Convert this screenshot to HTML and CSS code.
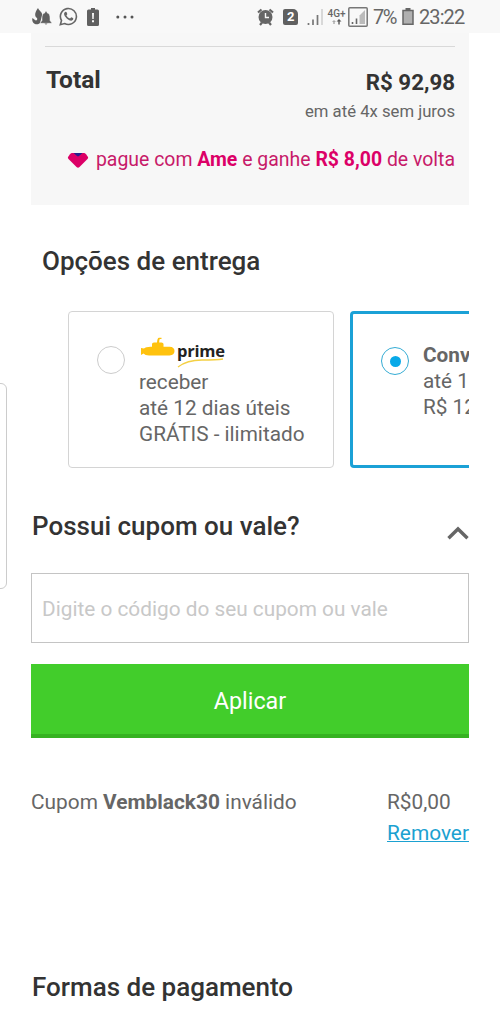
FILE: index.html
```html
<!DOCTYPE html>
<html lang="pt-BR">
<head>
<meta charset="utf-8">
<title>Carrinho</title>
<link rel="stylesheet" href="styles.css">
</head>
<body>
<header class="status">
  <div class="status-left">
    <svg class="ic-notify" width="20" height="18" viewBox="0 0 20 18"><path fill="#606060" d="M6 0C7 3 11 4 10 8L8 15C6 17 3 16.500 1.500 15C0 13.500 0 11 .5 10L3 12C4 13 6 12 5 10C2 8 3 4 6 0Z"/><path fill="#606060" stroke="#f8f8f8" stroke-width=".5" d="M14 3.500C15 3.500 15 4 15 4.800C17.500 5.500 18 7.500 18 10V12.500L19.600 14.500V15.300H8.400V14.500L10 12.500V10C10 7.500 10.500 5.500 13 4.800C13 4 13 3.500 14 3.500Z"/><path fill="#606060" d="M12.500 15.500h3q-1.500 2.200-3 0Z"/></svg>
    <svg class="ic-chat" width="19" height="19" viewBox="0 0 19 19"><path fill="none" stroke="#666" stroke-width="1.600" d="M1.300 17.700L2.500 13.500A8 8 0 1 1 5.600 16.500Z"/><path fill="#666" d="M6 5Q7.200 4.200 7.600 5.300L8.300 7Q8.400 7.500 7.400 8.400Q8.700 10.800 11 11.600L12 10.400Q12.500 10.200 14.300 11.300Q14.500 13 12.800 13.600Q10.800 14 8 11.800Q5 9.200 5 7Q5 5.800 6 5Z"/></svg>
    <svg class="ic-alert" width="12" height="18" viewBox="0 0 12 18"><path fill="#606060" d="M4 0h4v1.500h2.500Q12 1.500 12 3v13.500Q12 18 10.500 18h-9Q0 18 0 16.500V3Q0 1.500 1.500 1.500H4Z"/><path fill="#f8f8f8" d="M5 5h2l-.3 6H5.300ZM5 12.300h2v2H5Z"/></svg>
    <svg class="ic-more" width="18" height="4" viewBox="0 0 18 4"><g fill="#555"><circle cx="1.800" cy="2" r="1.500"/><circle cx="9" cy="2" r="1.500"/><circle cx="16" cy="2" r="1.500"/></g></svg>
  </div>
  <div class="status-right">
    <svg class="ic-alarm" width="17" height="18" viewBox="0 0 17 18"><path stroke="#666" stroke-width="2.200" d="M1 4.500L4.500 1.500M16 4.500L12.500 1.500M3 17L5 14.500M14 17L12 14.500"/><circle cx="8.500" cy="9" r="7" fill="#666"/><path fill="none" stroke="#f8f8f8" stroke-width="1.400" d="M8.500 5V9.500H12"/></svg>
    <span class="sim">2</span>
    <svg class="ic-bars" width="16" height="18" viewBox="0 0 16 18"><path stroke="#777" stroke-width="1.700" d="M1.500 15v2M6 11.500V17M10.500 7V17"/><path stroke="#c6c6c6" stroke-width="1.300" d="M15 1V17"/></svg>
    <span class="net"><span>4G+</span><svg width="10" height="6" viewBox="0 0 10 6"><path fill="#aaa" d="M2 1L4 3H2.700V5H1.300V3H0Z"/><path fill="#555" d="M7 0L9.500 2.500H7.700V5.500H6.300V2.500H4.500Z"/></svg></span>
    <svg class="ic-box" width="20" height="20" viewBox="0 0 20 20"><rect x=".8" y=".8" width="18.400" height="18.400" rx="1" fill="none" stroke="#777" stroke-width="1.500"/><path fill="#bbb" d="M17 3V17H11.500V8.500Z"/><path stroke="#666" stroke-width="1.600" d="M4.500 15v2M8.500 11.500V17"/></svg>
    <span class="pct">7%</span>
    <svg class="ic-bat" width="12" height="17" viewBox="0 0 12 17"><path fill="#b0b0b0" stroke="#666" stroke-width="1.500" d="M1 2.500h10V16.200H1Z"/><path fill="#666" d="M3.500 0h5v2.800h-5Z"/></svg>
    <span class="clock">23:22</span>
  </div>
</header>

<main>
  <section class="summary">
    <div class="total-row">
      <span class="total">Total</span>
      <div class="amounts"><strong class="price">R$ 92,98</strong><span class="parcel">em até 4x sem juros</span></div>
    </div>
    <div class="ame">
      <svg width="22" height="17" viewBox="0 0 22 17"><path fill="#dc0067" d="M5 1H17Q18 1 19 2.200L21 5Q21.500 6 20.500 7L12.500 15Q11 16.500 9.500 15L1.500 7Q.5 6 1 5L3 2.200Q4 1 5 1Z"/><path fill="#27208c" d="M6.500 1h9L12 4q-1 .8-2 0Z"/></svg>
      <span>pague com <b>Ame</b> e ganhe <b>R$ 8,00</b> de volta</span>
    </div>
  </section>

  <h2 class="delivery-title">Opções de entrega</h2>
  <div class="options">
    <label class="option">
      <span class="radio"></span>
      <span class="option-body">
        <span class="logo">
          <svg width="35" height="20" viewBox="0 0 35 20"><path fill="#ffc20e" d="M4 11.500Q6 9.500 12 9.800V7Q12 5.500 14 5.500H17Q17.300 1 19 .8H21.500V1.900H20Q19.200 2 19.200 5.500H21.500Q23.500 5.500 23.500 7V9.800H29.500Q34.500 10 34.500 14T29.500 18.500H9Q5 18.500 3.500 16.500L1 18V11Z"/></svg>
          <span class="prime">prime</span>
          <svg class="swoosh" width="50" height="10" viewBox="0 0 50 10"><path fill="none" stroke="#f4d044" stroke-width="1.300" d="M1 9Q10 2 25 2T46 1"/></svg>
        </span>
        <span>receber</span><span>até 12 dias úteis</span><span>GRÁTIS - ilimitado</span>
      </span>
    </label>
    <label class="option selected">
      <span class="radio"></span>
      <span class="option-body"><b>Conv</b><span>até 1</span><span>R$ 12</span></span>
    </label>
  </div>

  <div class="coupon-head">
    <h2>Possui cupom ou vale?</h2>
    <svg width="22" height="14" viewBox="0 0 22 14"><path fill="none" stroke="#666" stroke-width="3.400" d="M1.500 12.300L11 3L20.500 12.300"/></svg>
  </div>
  <input class="coupon" type="text" placeholder="Digite o código do seu cupom ou vale">
  <button class="apply">Aplicar</button>
  <div class="coupon-row">
    <span class="coupon-msg">Cupom <b>Vemblack30</b> inválido</span>
    <div class="coupon-value"><span>R$0,00</span><a>Remover</a></div>
  </div>
  <h2 class="pay-title">Formas de pagamento</h2>
</main>
<div class="edge-handle"></div>
</body>
</html>
```
FILE: styles.css
```css
* { box-sizing: border-box; }
body { margin: 0; width: 500px; height: 1028px; overflow: hidden; background: #fff; font-family: Roboto, sans-serif; color: #666; }
svg { display: block; flex: none; }
h2 { margin: 0; padding-left: 1px; font-size: 26px; line-height: 30px; font-weight: 500; color: #333; white-space: nowrap; }
b { font-weight: 700; }

.status { height: 33px; background: #f8f8f8; display: flex; justify-content: space-between; padding: 0 35px 0 32px; }
.status-left, .status-right { display: flex; align-items: center; height: 33px; }
.ic-chat { margin-left: 7px; }
.ic-alert { margin-left: 9px; }
.ic-more { margin-left: 17px; }
.sim { width: 15px; height: 16px; margin-left: 9px; background: #606060; color: #fff; border-radius: 2px 5px 2px 2px; font-size: 13px; line-height: 16px; font-weight: 700; text-align: center; }
.ic-bars { margin-left: 9px; }
.net { width: 19px; margin-left: 4px; display: flex; flex-direction: column; align-items: center; font-size: 10px; line-height: 10px; font-weight: 500; color: #666; }
.ic-box { margin-left: 2px; }
.pct { margin-left: 5px; font-size: 20px; letter-spacing: -1.500px; padding-top: 1px; }
.ic-bat { margin-left: 6px; }
.clock { margin-left: 5px; font-size: 20px; letter-spacing: -.9px; width: 46px; white-space: nowrap; padding-top: 1px; }

main { padding: 0 31px; }
.summary { height: 172px; background: #f7f7f7; padding: 13px 14px 0; }
.total-row { display: flex; justify-content: space-between; border-top: 1px solid #d9d9d9; padding-top: 18px; }
.total { font-size: 24.500px; line-height: 30px; font-weight: 700; color: #333; padding-left: 1px; }
.amounts { display: flex; flex-direction: column; align-items: flex-end; padding-top: 3px; }
.price { font-size: 22.300px; line-height: 28px; color: #333; }
.parcel { font-size: 16.700px; line-height: 20px; margin-top: 6px; }
.ame { display: flex; justify-content: flex-end; align-items: center; gap: 7px; height: 24px; margin-top: 26px; font-size: 19.450px; line-height: 24px; color: #c71a69; white-space: nowrap; }
.ame b { color: #dc0067; }

.delivery-title { padding-left: 11px; margin-top: 41px; }
.options { display: flex; gap: 16px; overflow: hidden; padding-left: 37px; margin-top: 35px; }
.option { flex: none; width: 266px; height: 157px; border: 1px solid #d4d4d4; border-radius: 4px; display: flex; gap: 14px; padding: 25px 0 0 28px; }
.radio { flex: none; width: 28px; height: 28px; margin-top: 9px; border: 1.500px solid #ccc; border-radius: 50%; }
.option-body { display: flex; flex-direction: column; font-size: 20.750px; line-height: 26px; white-space: nowrap; }
.logo { position: relative; display: flex; width: 90px; height: 32px; margin-left: 1px; }
.prime { color: #222; font-family: "Open Sans", sans-serif; font-size: 16.500px; font-weight: 700; line-height: 24px; letter-spacing: -.2px; margin: 2px 0 0 2px; }
.swoosh { position: absolute; left: 37px; top: 21px; }
.selected { border: 3px solid #1ba1d6; padding: 28px 0 0 28px; }
.selected .radio { border-color: #35acd4; display: grid; place-items: center; margin-top: 5px; }
.selected .radio::after { content: ""; width: 11px; height: 11px; border-radius: 50%; background: #08a9e8; }

.coupon-head { display: flex; justify-content: space-between; margin-top: 43px; }
.coupon-head svg { margin-top: 15px; }
.coupon { display: block; width: 100%; height: 70px; margin-top: 32px; border: 1px solid #c4c4c4; padding: 1px 10px 0; font: 20.800px Roboto, sans-serif; background: #fff; }
.coupon::placeholder { color: #c8c8c8; opacity: 1; }
.apply { display: block; width: 100%; height: 74px; margin-top: 21px; border: 0; border-bottom: 4px solid #36b221; background: #42cd2b; color: #fff; font: 23.300px Roboto, sans-serif; padding: 3px 0 0; }
.coupon-row { display: flex; justify-content: space-between; margin-top: 49px; font-size: 20.850px; line-height: 31px; white-space: nowrap; }
.coupon-value { display: flex; flex-direction: column; width: 82px; }
.coupon-value a { color: #1ba1d1; text-decoration: underline; text-decoration-thickness: 1px; }
.pay-title { margin-top: 123px; }
.edge-handle { position: absolute; left: -10px; top: 383px; width: 17px; height: 206px; border: 1px solid #ccc; border-radius: 6px; }
```
